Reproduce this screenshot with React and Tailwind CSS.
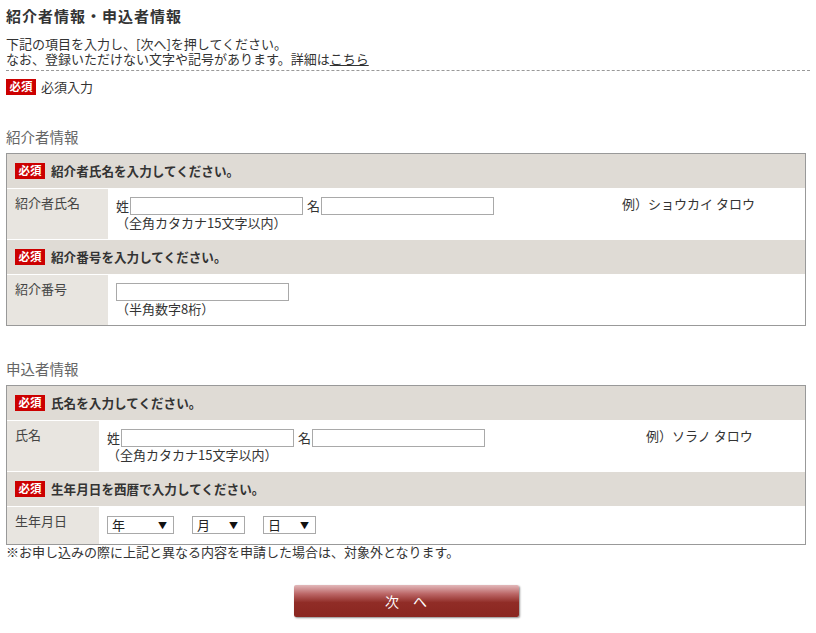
import React from "react";

function Badge() {
  return (
    <span className="inline-flex h-[16px] w-[30px] shrink-0 items-center justify-center bg-[#cc0000] text-[11.5px] font-bold leading-none text-white">
      必須
    </span>
  );
}

function HeaderRow({ children }) {
  return (
    <div className="flex h-[34px] items-center gap-[6px] bg-[#dfdbd5] pl-[8px]">
      <Badge />
      <span className="text-[12.6px] font-bold leading-[16px] text-[#333]">{children}</span>
    </div>
  );
}

function TextBox({ w }) {
  return <div className={`h-[18px] border border-[#a9a9a9] bg-white ${w}`} />;
}

function Select({ label, w }) {
  return (
    <div className={`flex h-[18px] items-center justify-between border border-[#a9a9a9] bg-white pl-[4px] pr-[6px] ${w}`}>
      <span className="text-[13px] leading-[16px] text-[#222]">{label}</span>
      <span className="text-[9px] leading-none text-[#111]">▼</span>
    </div>
  );
}

function NameRow({ label, labelW, leftW, example }) {
  return (
    <div className="flex h-[50px] bg-white">
      <div className={`${labelW} shrink-0 bg-[#e8e5e0] pl-[8px] pt-[6px] text-[13px] leading-[16px] text-[#444]`}>
        {label}
      </div>
      <div className="flex pl-[8px] pt-[8px]">
        <div className={`${leftW} shrink-0`}>
          <div className="flex h-[18px] items-center text-[13px] leading-[16px] text-[#333]">
            <span className="mr-[1px]">姓</span>
            <TextBox w="w-[173px]" />
            <span className="ml-[4px] mr-[1px]">名</span>
            <TextBox w="w-[173px]" />
          </div>
          <div className="text-[13px] leading-[16px] text-[#333]">（全角カタカナ15文字以内）</div>
        </div>
        <div className="-mt-[1px] text-[13px] leading-[16px] text-[#333]">{example}</div>
      </div>
    </div>
  );
}

export default function App() {
  return (
    <div className="min-h-[633px] w-[816px] bg-white font-['Noto_Sans_CJK_JP',sans-serif] text-[#333]">
      <div className="w-[810px] pl-[6px] pt-[6px]">
        <h1 className="h-[20px] text-[15px] font-bold leading-[20px] tracking-[1px] text-[#333]">
          紹介者情報・申込者情報
        </h1>

        <div className="mt-[10px] border-b border-dashed border-[#999] pb-[4px] text-[13px] leading-[15px]">
          <p>下記の項目を入力し、[次へ]を押してください。</p>
          <p>
            なお、登録いただけない文字や記号があります。詳細は
            <a className="underline">こちら</a>
          </p>
        </div>

        <div className="mt-[8px] flex h-[16px] items-center gap-[5px]">
          <Badge />
          <span className="text-[13px] leading-[16px]">必須入力</span>
        </div>

        {/* 紹介者 */}
        <h2 className="mt-[32px] h-[20px] text-[14.5px] leading-[20px] text-[#666]">紹介者情報</h2>
        <div className="mt-[6px] flex w-[800px] flex-col gap-px border border-[#999] bg-white">
          <HeaderRow>紹介者氏名を入力してください。</HeaderRow>
          <NameRow label="紹介者氏名" labelW="w-[101px]" leftW="w-[506px]" example="例）ショウカイ タロウ" />
          <HeaderRow>紹介番号を入力してください。</HeaderRow>
          <div className="flex h-[50px] bg-white">
            <div className="w-[101px] shrink-0 bg-[#e8e5e0] pl-[8px] pt-[6px] text-[13px] leading-[16px] text-[#444]">
              紹介番号
            </div>
            <div className="pl-[8px] pt-[8px]">
              <TextBox w="w-[173px]" />
              <div className="text-[13px] leading-[16px]">（半角数字8桁）</div>
            </div>
          </div>
        </div>

        {/* 申込者 */}
        <h2 className="mt-[33px] h-[20px] text-[14.5px] leading-[20px] text-[#666]">申込者情報</h2>
        <div className="mt-[6px] flex w-[800px] flex-col gap-px border border-[#999] bg-white">
          <HeaderRow>氏名を入力してください。</HeaderRow>
          <NameRow label="氏名" labelW="w-[92px]" leftW="w-[539px]" example="例）ソラノ タロウ" />
          <HeaderRow>生年月日を西暦で入力してください。</HeaderRow>
          <div className="flex h-[37px] bg-white">
            <div className="w-[92px] shrink-0 bg-[#e8e5e0] pl-[8px] pt-[6px] text-[13px] leading-[16px] text-[#444]">
              生年月日
            </div>
            <div className="flex gap-[18px] pl-[8px] pt-[9px]">
              <Select label="年" w="w-[67px]" />
              <Select label="月" w="w-[53px]" />
              <Select label="日" w="w-[53px]" />
            </div>
          </div>
        </div>

        <p className="text-[13px] leading-[14px]">
          ※お申し込みの際に上記と異なる内容を申請した場合は、対象外となります。
        </p>

        <div className="mt-[26px] flex w-[800px] justify-center">
          <button className="flex h-[32px] w-[225px] items-center justify-center rounded-[2px] bg-[linear-gradient(to_bottom,#e2b8ba_0%,#bb6666_28%,#902c26_55%,#8a2620_100%)] text-[14px] leading-none text-white shadow-[1px_1px_2px_rgba(0,0,0,0.45)]">
            次　へ
          </button>
        </div>
      </div>
    </div>
  );
}
